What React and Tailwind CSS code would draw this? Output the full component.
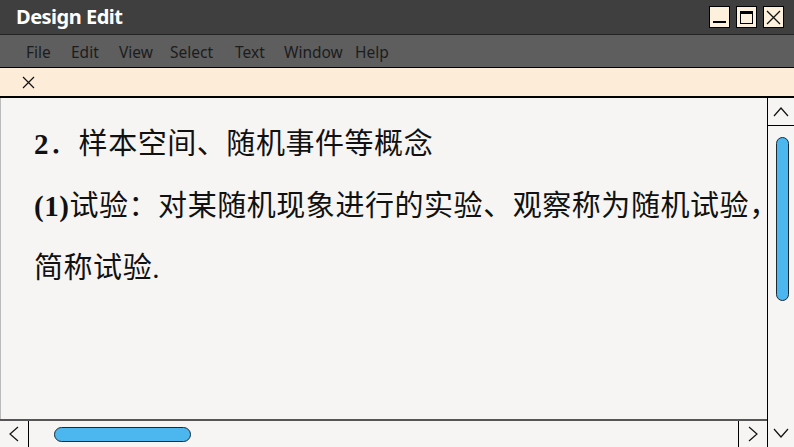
import React from 'react';

const cjk = { fontFamily: '"Liberation Serif", "Noto Sans CJK SC", serif' };

function WinButton({ children }) {
    return (
        <div className="w-[21px] h-[22px] bg-[#fdf0dc] border border-black flex items-center justify-center">
            {children}
        </div>
    );
}

export default function App() {
    // widths taken from where each menu label starts
    const menus = [
        ['File', 'w-[45px]'],
        ['Edit', 'w-[48px]'],
        ['View', 'w-[51px]'],
        ['Select', 'w-[65px]'],
        ['Text', 'w-[49px]'],
        ['Window', 'w-[71px]'],
        ['Help', ''],
    ];

    return (
        <div className="w-[794px] h-[447px] flex flex-col overflow-hidden bg-[#f6f5f3]" style={{ fontFamily: '"Noto Sans", "DejaVu Sans", sans-serif' }}>
            {/* Title bar */}
            <div className="h-[35px] bg-[#3f3f3f] flex items-center justify-between pl-[16px] pr-[10px] border-b border-[#222]">
                <span className="text-white font-bold text-[20px] tracking-tight">Design Edit</span>
                <div className="flex gap-[6px]">
                    <WinButton>
                        <div className="w-[13px] h-[2px] bg-black mt-[10px]" />
                    </WinButton>
                    <WinButton>
                        <div className="w-[13px] h-[13px] border border-black border-t-[3px]" />
                    </WinButton>
                    <WinButton>
                        <svg width="15" height="15" viewBox="0 0 15 15">
                            <path d="M1 1 L14 14 M14 1 L1 14" stroke="#111" strokeWidth="1.3" />
                        </svg>
                    </WinButton>
                </div>
            </div>

            {/* Menu bar */}
            <div className="h-[33px] bg-[#5e5e5e] flex items-center pl-[26px] pt-[3px] border-b border-black text-[15.5px] text-[#1c1c1c]">
                {menus.map(([m, w]) => (
                    <span key={m} className={w}>{m}</span>
                ))}
            </div>

            {/* Tab strip */}
            <div className="h-[30px] bg-[#fdecd8] flex items-center pl-[22px] border-b-2 border-black">
                <svg width="13" height="13" viewBox="0 0 13 13">
                    <path d="M1 1 L12 12 M12 1 L1 12" stroke="#111" strokeWidth="1.2" />
                </svg>
            </div>

            {/* Body */}
            <div className="flex-1 flex min-h-0">
                <div className="flex-1 flex flex-col min-w-0">
                    <div className="flex-1 pl-[33px] pt-[15px] border-l border-[#bbb] text-[#111] text-[29px] tracking-[0.55px] leading-[62px] whitespace-nowrap" style={cjk}>
                        <p><b>2</b>．样本空间、随机事件等概念</p>
                        <p>
                            <b>(1)</b>试验：对某随机现象进行的实验、观察称为随机试验<span className="-mr-[16px]">，</span>
                        </p>
                        <p>简称试验.</p>
                    </div>
                    {/* Horizontal scrollbar */}
                    <div className="h-[28px] flex border-t-2 border-[#555]">
                        <div className="w-[29px] border-r border-black flex items-center justify-center">
                            <svg width="10" height="16" viewBox="0 0 10 16">
                                <path d="M9 1 L1 8 L9 15" stroke="#111" strokeWidth="1.2" fill="none" />
                            </svg>
                        </div>
                        <div className="flex-1 flex items-center pl-[25px]">
                            <div className="w-[137px] h-[15px] rounded-full bg-[#4cb6ef] border border-[#1a2a38]" />
                        </div>
                        <div className="w-[29px] border-l border-black flex items-center justify-center">
                            <svg width="10" height="16" viewBox="0 0 10 16">
                                <path d="M1 1 L9 8 L1 15" stroke="#111" strokeWidth="1.2" fill="none" />
                            </svg>
                        </div>
                    </div>
                </div>

                {/* Vertical scrollbar */}
                <div className="w-[27px] border-l border-black flex flex-col">
                    <div className="h-[28px] border-b border-black flex items-center justify-center">
                        <svg width="16" height="10" viewBox="0 0 16 10">
                            <path d="M1 9 L8 1 L15 9" stroke="#111" strokeWidth="1.2" fill="none" />
                        </svg>
                    </div>
                    <div className="flex-1 flex justify-center pt-[11px] pl-[2px]">
                        <div className="w-[13px] h-[164px] rounded-full bg-[#4cb6ef] border border-[#1a2a38]" />
                    </div>
                    <div className="h-[28px] flex items-center justify-center">
                        <svg width="16" height="10" viewBox="0 0 16 10">
                            <path d="M1 1 L8 9 L15 1" stroke="#111" strokeWidth="1.2" fill="none" />
                        </svg>
                    </div>
                </div>
            </div>
        </div>
    );
}
